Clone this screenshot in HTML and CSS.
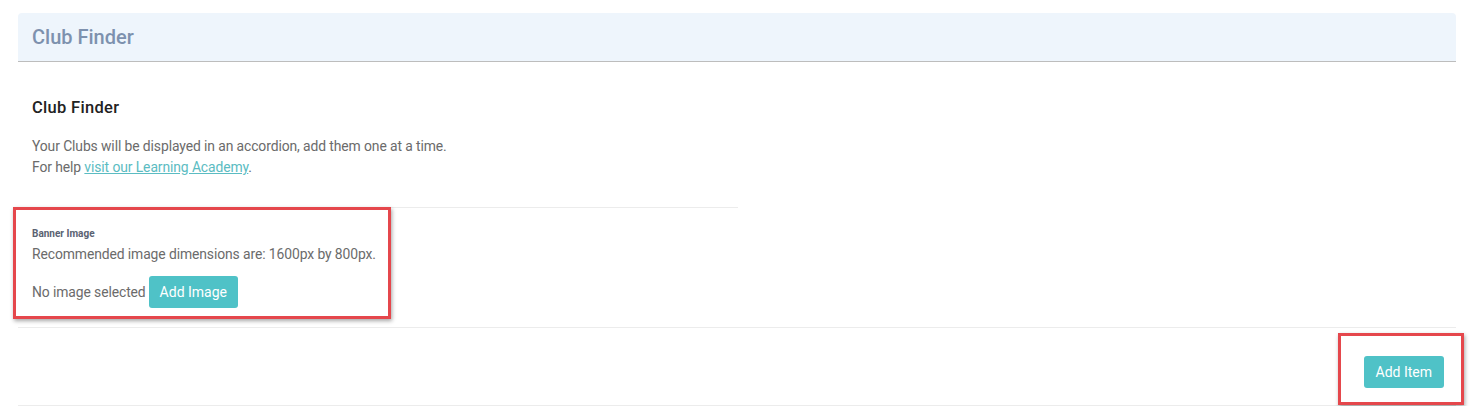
FILE: index.html
```html
<!DOCTYPE html>
<html>
<head>
<meta charset="utf-8">
<link rel="stylesheet" href="styles.css">
</head>
<body>
<div class="page">
  <div class="panel-head"><h2 class="panel-title">Club Finder</h2></div>
  <div class="intro">
    <h3 class="intro-title">Club Finder</h3>
    <p class="intro-text">Your Clubs will be displayed in an accordion, add them one at a time.<br>For help <a href="#" class="link">visit our Learning Academy</a>.</p>
  </div>
  <div class="banner">
    <div class="banner-label">Banner Image</div>
    <div class="banner-hint">Recommended image dimensions are: 1600px by 800px.</div>
    <div class="banner-row"><span class="banner-none">No image selected</span><button class="btn">Add Image</button></div>
    <div class="mark mark-banner"></div>
  </div>
  <div class="actions">
    <button class="btn btn-item">Add Item</button>
    <div class="mark mark-item"></div>
  </div>
</div>
</body>
</html>
```

FILE: styles.css
```css
* { box-sizing: border-box; }
html, body { margin: 0; padding: 0; background: #fff; }
body { font-family: Roboto, "Liberation Sans", sans-serif; color: #666; }
.page { padding: 13px 14px 0 18px; }
.panel-head {
  background: #eef5fc;
  border-radius: 4px 4px 0 0;
  border-bottom: 1px solid #bdbdbd;
  height: 49px;
  display: flex;
  align-items: center;
  padding: 0 14px;
}
.panel-title { margin: 0; font-size: 20px; font-weight: 500; color: #7d91ae; }
.intro { padding: 36px 14px 0; width: 720px; border-bottom: 1px solid #ececec; height: 146px; }
.intro-title { margin: 0; font-size: 16.5px; font-weight: 500; color: #222; letter-spacing: 0.3px; }
.intro-text { margin: 19px 0 0; font-size: 13.9px; line-height: 21px; color: #6b6b6b; letter-spacing: -0.1px; }
.link { color: #5bbcc2; text-decoration: underline; }
.banner { position: relative; padding: 20px 14px 0; height: 120px; border-bottom: 1px solid #ececec; }
.banner-label { font-size: 10px; font-weight: 700; color: #5a6272; line-height: 12px; }
.banner-hint { margin-top: 6px; font-size: 13.9px; line-height: 16px; color: #6b6b6b; letter-spacing: -0.1px; }
.banner-row { margin-top: 14px; display: flex; align-items: center; gap: 3px; }
.banner-none { font-size: 13.9px; color: #6b6b6b; letter-spacing: -0.1px; }
.btn {
  background: #4fc2c7;
  border: none;
  border-radius: 3px;
  color: #fff;
  font-family: Roboto, "Liberation Sans", sans-serif;
  font-size: 14px;
  height: 32px;
  padding: 0 11px;
  cursor: pointer;
}
.btn-item { padding: 0 12px; }
.actions { position: relative; height: 78px; border-bottom: 1px solid #ececec; display: flex; justify-content: flex-end; align-items: center; padding: 10px 12px 0 0; }
.mark { position: absolute; border: 3px solid #e5474c; box-shadow: 1px 2px 4px rgba(0,0,0,0.35); }
.mark-banner { left: -5px; top: -1px; width: 378px; height: 112px; }
.mark-item { right: -8px; top: 5px; width: 126px; height: 72px; }
```
